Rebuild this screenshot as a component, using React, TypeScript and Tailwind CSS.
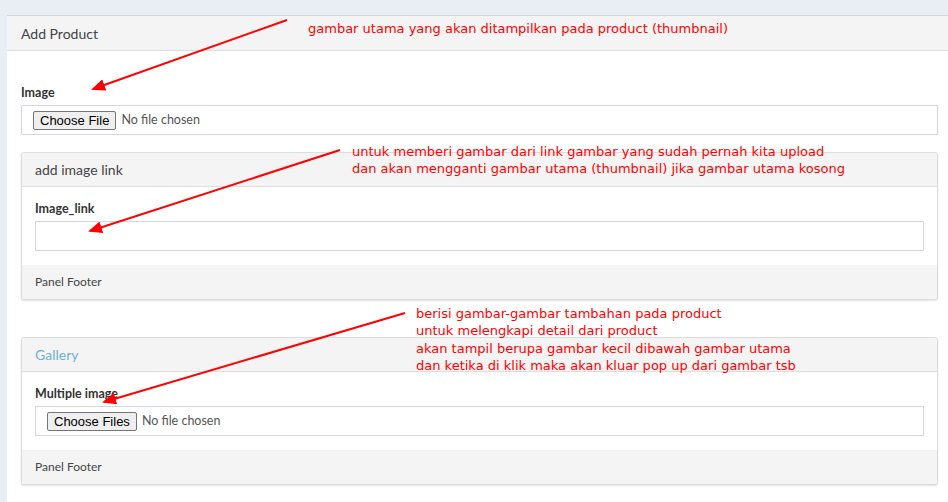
const FakeFile = ({ label }: { label: string }) => (
  <div className="flex h-[30px] items-center border border-[#d2d6de] bg-white pl-[11px]">
    <span className="flex h-[19px] items-center rounded-[2px] border border-[#767676] bg-[#efefef] px-[6px] text-[13px] leading-none text-black [font-family:'Liberation_Sans',Arial,sans-serif]">
      {label}
    </span>
    <span className="ml-[5px] text-[12.5px] text-[#555]">No file chosen</span>
  </div>
);

const Panel = ({
  title,
  titleClass,
  children,
}: {
  title: string;
  titleClass?: string;
  children: React.ReactNode;
}) => (
  <div className="rounded-[3px] border border-[#dcdcdc] bg-white shadow-[0_1px_2px_rgba(0,0,0,0.12)]">
    <div className="flex h-[34px] items-center rounded-t-[3px] border-b border-[#ddd] bg-[#f4f4f4] px-[13px]">
      <span className={`text-[14px] ${titleClass ?? "text-[#444]"}`}>{title}</span>
    </div>
    <div className="px-[13px] pt-[12px] pb-[14px]">{children}</div>
    <div className="flex h-[34px] items-center rounded-b-[3px] bg-[#f4f4f4] px-[13px] text-[12px] text-[#444]">
      Panel Footer
    </div>
  </div>
);

const Label = ({ text }: { text: string }) => (
  <div className="mb-[2px] h-[20px] text-[12.5px] font-bold leading-[20px] text-[#333]">{text}</div>
);

const notes = [
  { top: 20, left: 308, lines: ["gambar utama yang akan ditampilkan pada product (thumbnail)"] },
  {
    top: 143,
    left: 352,
    lines: [
      "untuk memberi gambar dari link gambar yang sudah pernah kita upload",
      "dan akan mengganti gambar utama (thumbnail) jika gambar utama kosong",
    ],
  },
  {
    top: 305,
    left: 416,
    lines: [
      "berisi gambar-gambar tambahan pada product",
      "untuk melengkapi detail dari product",
      "akan tampil berupa gambar kecil dibawah gambar utama",
      "dan ketika di klik maka akan kluar pop up dari gambar tsb",
    ],
  },
];

export default function App() {
  return (
    <div className="relative h-[502px] w-[948px] overflow-hidden bg-[#e9edf4] pt-[15px] pl-[7px] [font-family:Lato,'Open_Sans',sans-serif]">
      <div className="w-[945px] border-t border-[#d6d6d6] bg-white">
        <div className="flex h-[35px] items-center border-b border-[#ddd] bg-[#f4f4f4] px-[14px]">
          <span className="text-[14px] text-[#444]">Add Product</span>
        </div>
        <div className="px-[14px] pt-[32px]">
          <Label text="Image" />
          <FakeFile label="Choose File" />

          <div className="mt-[17px]">
            <Panel title="add image link">
              <Label text="Image_link" />
              <div className="h-[30px] border border-[#d2d6de] bg-white" />
            </Panel>
          </div>

          <div className="mt-[37px]">
            <Panel title="Gallery" titleClass="text-[#72afd2]">
              <Label text="Multiple image" />
              <FakeFile label="Choose Files" />
            </Panel>
          </div>
          <div className="h-[40px]" />
        </div>
      </div>

      {notes.map((n, i) => (
        <div
          key={i}
          className="absolute text-[13px] leading-[17.4px] text-[#ff0000] [font-family:'DejaVu_Sans',sans-serif]"
          style={{ top: n.top, left: n.left }}
        >
          {n.lines.map((l) => (
            <div key={l}>{l}</div>
          ))}
        </div>
      ))}

      <svg className="pointer-events-none absolute inset-0" width="948" height="502">
        <defs>
          <marker id="head" markerWidth="7" markerHeight="6" refX="6" refY="3" orient="auto" markerUnits="strokeWidth">
            <path d="M0,0 L7,3 L0,6 z" fill="#ff0000" />
          </marker>
        </defs>
        <line x1="287" y1="20" x2="93" y2="89" stroke="#ff0000" strokeWidth="2" markerEnd="url(#head)" />
        <line x1="340" y1="150" x2="90" y2="231" stroke="#ff0000" strokeWidth="2" markerEnd="url(#head)" />
        <line x1="405" y1="313" x2="104" y2="402" stroke="#ff0000" strokeWidth="2" markerEnd="url(#head)" />
      </svg>
    </div>
  );
}
